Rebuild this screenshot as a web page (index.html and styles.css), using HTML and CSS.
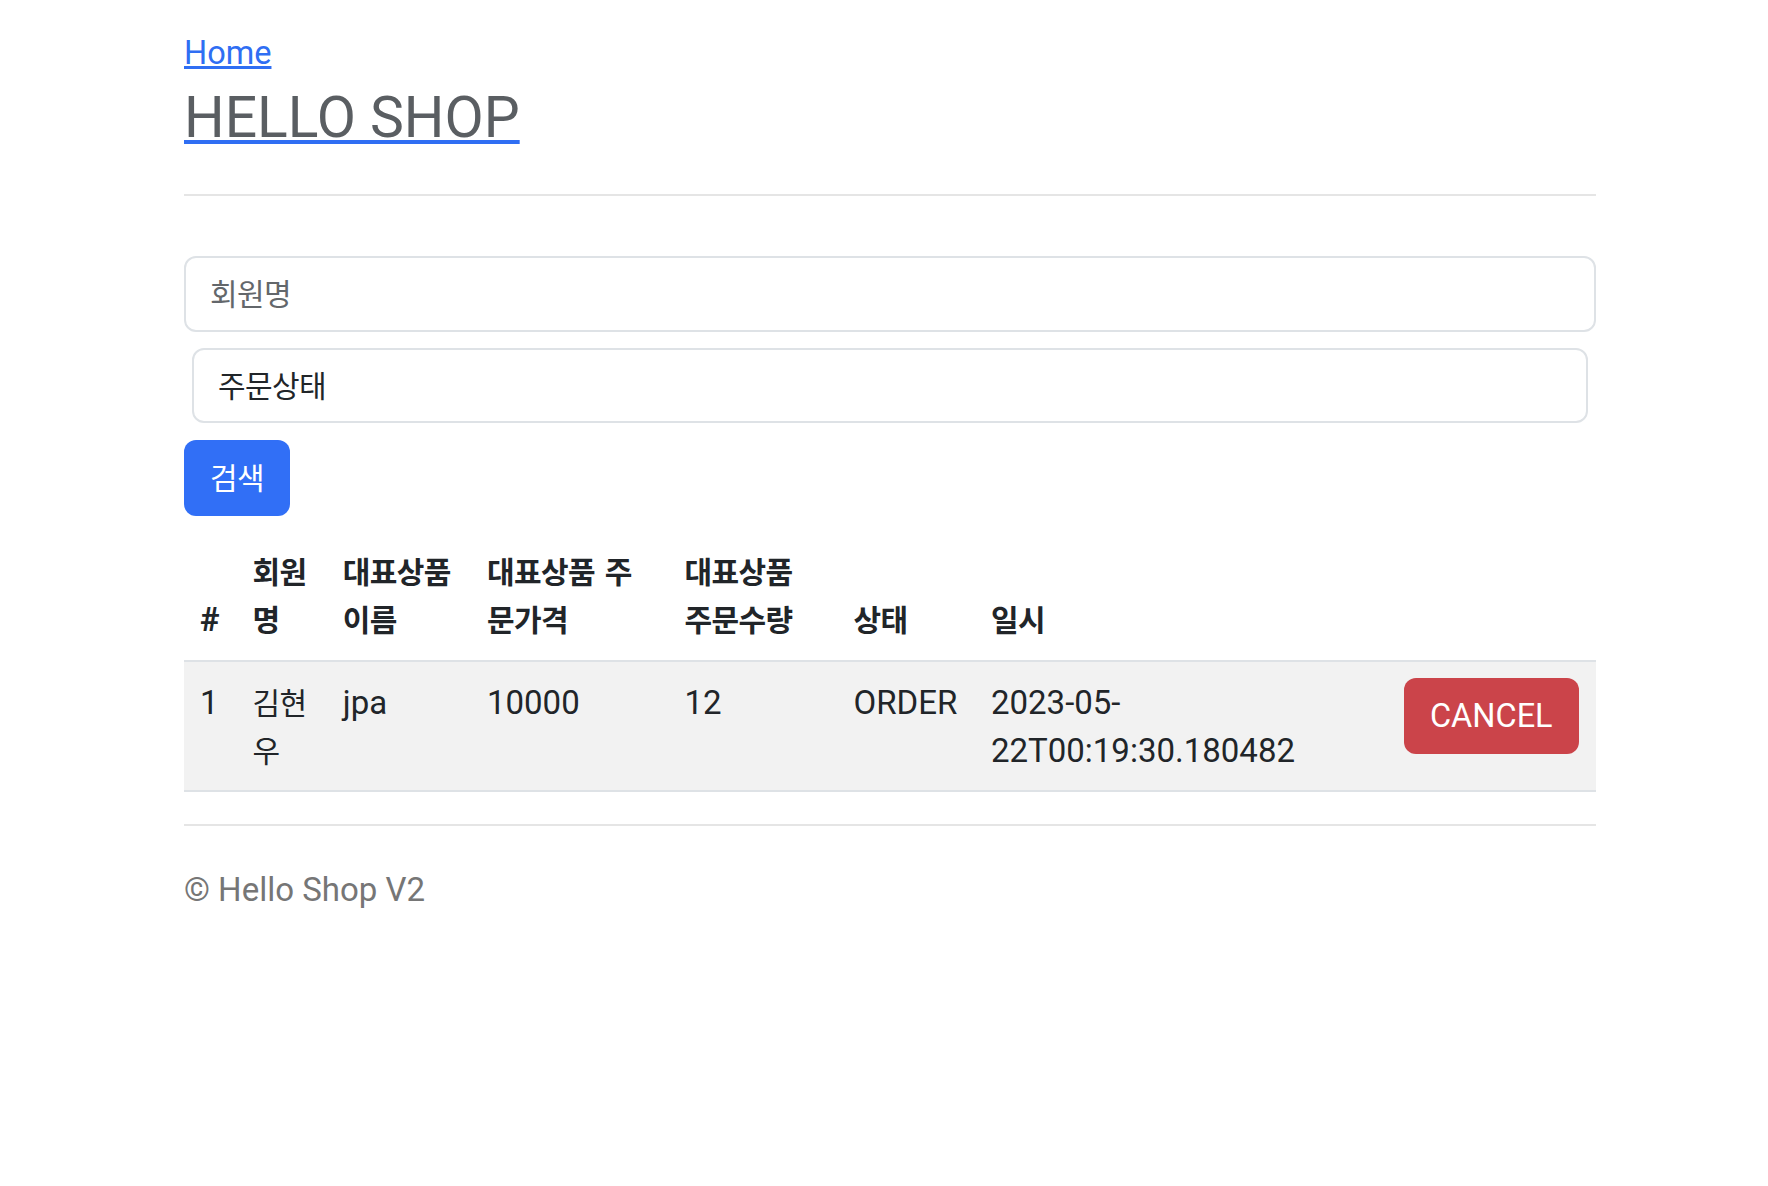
FILE: index.html
```html
<!DOCTYPE html>
<html lang="ko">
<head>
<meta charset="utf-8">
<title>HELLO SHOP</title>
<link rel="stylesheet" href="styles.css">
</head>
<body>
<div class="page">
  <header class="header">
    <a class="home" href="#">Home</a>
    <h3 class="brand-title"><a class="brand" href="#">HELLO SHOP</a></h3>
  </header>
  <hr class="rule">
  <form class="search">
    <input class="field ko" type="text" placeholder="회원명">
    <select class="field field-select ko">
      <option>주문상태</option>
      <option>ORDER</option>
      <option>CANCEL</option>
    </select>
    <button class="btn btn-primary ko" type="button">검색</button>
  </form>
  <table class="orders">
    <colgroup>
      <col class="c-no">
      <col class="c-member">
      <col class="c-item">
      <col class="c-price">
      <col class="c-qty">
      <col class="c-status">
      <col class="c-date">
      <col class="c-action">
    </colgroup>
    <thead>
      <tr>
        <th>#</th>
        <th class="ko">회원명</th>
        <th class="ko">대표상품 이름</th>
        <th class="ko">대표상품 주문가격</th>
        <th class="ko">대표상품 주문수량</th>
        <th class="ko">상태</th>
        <th class="ko">일시</th>
        <th></th>
      </tr>
    </thead>
    <tbody>
      <tr>
        <td>1</td>
        <td class="ko">김현우</td>
        <td>jpa</td>
        <td>10000</td>
        <td>12</td>
        <td>ORDER</td>
        <td>2023-05-<wbr>22T00:19:30.180482</td>
        <td><a class="btn btn-danger" href="#">CANCEL</a></td>
      </tr>
    </tbody>
  </table>
  <footer class="footer">© Hello Shop V2</footer>
</div>
</body>
</html>
```
FILE: styles.css
```css
* {
  box-sizing: border-box;
}

body {
  margin: 0;
  background: #ffffff;
  color: #212529;
  font-family: Roboto, "Noto Sans CJK KR", sans-serif;
  font-size: 33px;
  line-height: 48px;
}

.page {
  width: 1412px;
  margin-left: 184px;
  padding-top: 29px;
}

.home {
  display: block;
  width: max-content;
  color: #2f6ef3;
  font-size: 32.5px;
  text-decoration: underline;
  text-decoration-thickness: 3px;
  text-underline-offset: 2px;
}

.brand-title {
  margin: 8px 0 0;
  font-size: 57px;
  line-height: 66px;
  font-weight: 400;
}

.brand {
  color: #5a5e62;
  text-decoration: underline;
  text-decoration-color: #2f6ef3;
  text-decoration-thickness: 4px;
  text-underline-offset: 3px;
}

.rule {
  height: 0;
  margin: 43px 0 0;
  border: 0;
  border-top: 2px solid #e5e5e5;
}

.search {
  display: flex;
  flex-direction: column;
  align-items: flex-start;
  margin-top: 60px;
}

.field {
  display: block;
  width: 100%;
  height: 76px;
  padding: 0 24px 4px;
  border: 2px solid #dee2e6;
  border-radius: 12px;
  background: #ffffff;
  color: #212529;
  font: inherit;
  outline: none;
}

.field::placeholder {
  color: #63676b;
}

.field-select {
  width: auto;
  align-self: stretch;
  height: 75px;
  margin: 16px 8px 0;
  appearance: none;
  -webkit-appearance: none;
}

.btn {
  display: inline-flex;
  align-items: center;
  justify-content: center;
  height: 76px;
  padding: 0 24px;
  border: 2px solid transparent;
  border-radius: 12px;
  color: #ffffff;
  font: inherit;
  font-size: 32.5px;
  line-height: 48px;
  text-decoration: none;
  cursor: pointer;
  vertical-align: top;
}

.btn-primary {
  margin-top: 17px;
  padding-bottom: 4px;
  background: #316ff6;
}

.btn-danger {
  margin-top: -1px;
  background: #cb444a;
}

.ko {
  font-family: "Noto Sans CJK KR", sans-serif;
  font-size: 30px;
  letter-spacing: -0.6px;
  word-spacing: 2px;
}

.orders {
  width: 100%;
  margin: 16px 0 32px;
  border-collapse: collapse;
  table-layout: fixed;
}

.c-no { width: 52.6px; }
.c-member { width: 90.2px; }
.c-item { width: 144.2px; }
.c-price { width: 197.5px; }
.c-qty { width: 169.1px; }
.c-status { width: 137.4px; }
.c-date { width: 413px; }
.c-action { width: 208px; }

.orders th,
.orders td {
  padding: 16px;
  text-align: left;
  line-height: 48px;
  border-bottom: 2px solid #dee2e6;
}

.orders th {
  padding-top: 14px;
  padding-bottom: 18px;
  vertical-align: bottom;
  font-weight: 700;
}

.orders th:first-child {
  padding-top: 16px;
  padding-bottom: 16px;
}

.orders td {
  padding-top: 17px;
  padding-bottom: 15px;
  vertical-align: top;
  background: #f2f2f2;
  font-weight: 400;
}

.orders td.ko {
  padding-top: 15px;
  padding-bottom: 17px;
}

.footer {
  padding-top: 40px;
  border-top: 2px solid #e5e5e5;
  color: #767676;
}
```
